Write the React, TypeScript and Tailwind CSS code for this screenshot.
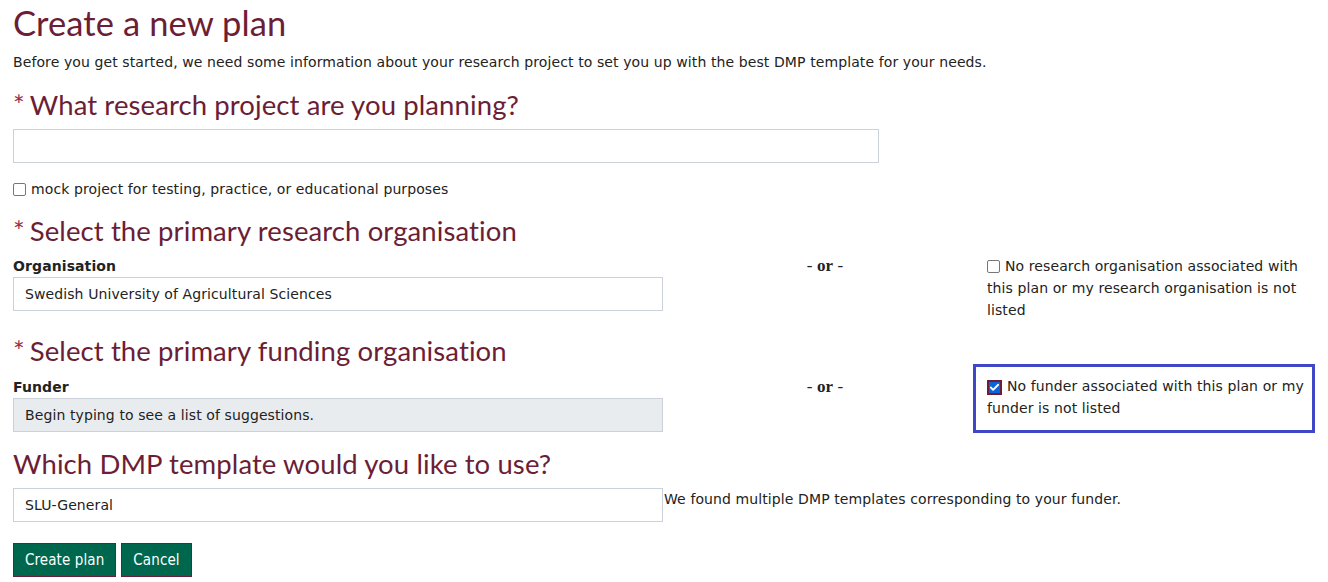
import { Check } from "lucide-react";

const heading = "font-['Lato','Open_Sans',sans-serif] text-[#6b1e35]";
const body = "font-['DejaVu_Sans','Verdana',sans-serif] text-[14px] tracking-[0.1px] text-[#222]";
const inputCls =
  "h-[34px] w-[650px] border border-[#ccd1d9] px-[11px] flex items-center text-[14px] text-[#222]";

function Req({ children }: { children: React.ReactNode }) {
  return (
    <h2 className={`${heading} text-[27.5px] leading-[34px]`}>
      <span className="text-[#9b2f3f] mr-[5px]">*</span>
      {children}
    </h2>
  );
}

function Box({ checked = false }: { checked?: boolean }) {
  if (checked) {
    return (
      <span className="inline-flex w-[15px] h-[15px] border-2 border-[#6b1e35] bg-[#0b64d8] items-center justify-center mr-[5px] align-[-2px]">
        <Check className="w-[11px] h-[11px] text-white" strokeWidth={4} />
      </span>
    );
  }
  return (
    <span className="inline-block w-[13px] h-[13px] border border-[#777] rounded-[2px] bg-white mr-[5px] align-[-2px]" />
  );
}

function Or() {
  return (
    <div className="font-['Liberation_Serif',serif] text-[17px] leading-[22px] text-[#222] text-center">
      - <b>or</b> -
    </div>
  );
}

export default function App() {
  return (
    <div className={`${body} bg-white w-[1328px] h-[582px] px-[13px] overflow-hidden`}>
      <h1 className={`${heading} text-[34.5px] leading-[46px]`}>Create a new plan</h1>
      <p className="mt-[5px] leading-[22px]">
        Before you get started, we need some information about your research project to set you
        up with the best DMP template for your needs.
      </p>

      <div className="mt-[15px]">
        <Req>What research project are you planning?</Req>
      </div>
      <div className={`${inputCls} w-[866px] mt-[7px] bg-white`} />
      <div className="mt-[15px] leading-[22px] flex items-center">
        <Box />
        mock project for testing, practice, or educational purposes
      </div>

      <div className="mt-[14px]">
        <Req>Select the primary research organisation</Req>
      </div>
      <div className="grid grid-cols-[650px_324px_315px] mt-[7px]">
        <div>
          <div className="font-bold leading-[22px]">Organisation</div>
          <div className={`${inputCls} bg-white`}>Swedish University of Agricultural Sciences</div>
        </div>
        <Or />
        <div className="leading-[22px]">
          <Box />
          No research organisation associated with this plan or my research organisation is not
          listed
        </div>
      </div>

      <div className="mt-[13px]">
        <Req>Select the primary funding organisation</Req>
      </div>
      <div className="grid grid-cols-[650px_324px_328px] mt-[8px]">
        <div>
          <div className="font-bold leading-[22px]">Funder</div>
          <div className={`${inputCls} bg-[#e9ecef] text-[#6c757d]`}>
            Begin typing to see a list of suggestions.
          </div>
        </div>
        <Or />
        <div className="w-[342px] border-[3px] border-[#4046c8] -mt-[12px] -ml-[14px] h-[69px] pl-[11px] pr-[6px] pt-[8px] leading-[22px]">
          <Box checked />
          No funder associated with this plan or my funder is not listed
        </div>
      </div>

      <h2 className={`${heading} text-[27.5px] leading-[34px] mt-[14px]`}>
        Which DMP template would you like to use?
      </h2>
      <div className="flex items-start mt-[7px]">
        <div className={`${inputCls} bg-white`}>SLU-General</div>
        <span className="ml-[1px] leading-[22px]">
          We found multiple DMP templates corresponding to your funder.
        </span>
      </div>

      <div className="flex gap-[5px] mt-[21px] font-['DejaVu_Sans_Condensed','DejaVu_Sans',sans-serif]">
        <button className="h-[34px] px-[11px] bg-[#00674f] border border-[#6b1e35] text-white text-[15px]">
          Create plan
        </button>
        <button className="h-[34px] px-[11px] bg-[#00674f] border border-[#6b1e35] text-white text-[15px]">
          Cancel
        </button>
      </div>
    </div>
  );
}
